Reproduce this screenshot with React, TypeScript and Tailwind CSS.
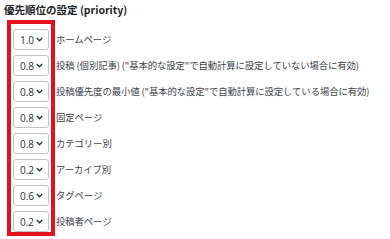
const rows = [
  { v: "1.0", label: "ホームページ" },
  { v: "0.8", label: "投稿 (個別記事) (\"基本的な設定\"で自動計算に設定していない場合に有効)" },
  { v: "0.8", label: "投稿優先度の最小値 (\"基本的な設定\"で自動計算に設定している場合に有効)" },
  { v: "0.8", label: "固定ページ" },
  { v: "0.8", label: "カテゴリー別" },
  { v: "0.2", label: "アーカイブ別" },
  { v: "0.6", label: "タグページ" },
  { v: "0.2", label: "投稿者ページ" },
];

function Chevron() {
  return (
    <svg width="7" height="5" viewBox="0 0 7 5" className="shrink-0">
      <path d="M0.8 1 L3.5 3.8 L6.2 1" fill="none" stroke="#2c3338" strokeWidth="1.3" />
    </svg>
  );
}

export default function App() {
  return (
    <div
      className="w-[390px] h-[239px] bg-white overflow-hidden text-[#3c434a]"
      style={{ fontFamily: '"Noto Sans CJK JP", "Noto Sans", sans-serif' }}
    >
      <div className="h-[20px] pl-[4px] pt-[3px] text-[10.5px] leading-[14px] font-bold text-[#1d2327]">
        優先順位の設定 (priority)
      </div>
      <div className="flex">
        {/* selects, boxed in red */}
        <div className="ml-[7px] w-[48px] h-[216px] border-4 border-[#e3101d] pt-[5px] flex flex-col gap-[5px]">
          {rows.map((r, i) => (
            <div
              key={i}
              className="ml-[2px] w-[36px] h-[21px] border border-[#c3c4c7] rounded-[3px] flex items-center pl-[6px] pr-[5px] justify-between bg-white"
            >
              <span className="text-[10px] leading-none text-[#2c3338]" style={{ fontFamily: '"Open Sans", "Noto Sans", sans-serif' }}>
                {r.v}
              </span>
              <Chevron />
            </div>
          ))}
        </div>
        <div className="pt-[9px] flex flex-col gap-[5px]">
          {rows.map((r, i) => (
            <div key={i} className="h-[21px] flex items-center pl-[1px] text-[9.4px] whitespace-nowrap tracking-[-0.1px]">
              {r.label}
            </div>
          ))}
        </div>
      </div>
    </div>
  );
}
